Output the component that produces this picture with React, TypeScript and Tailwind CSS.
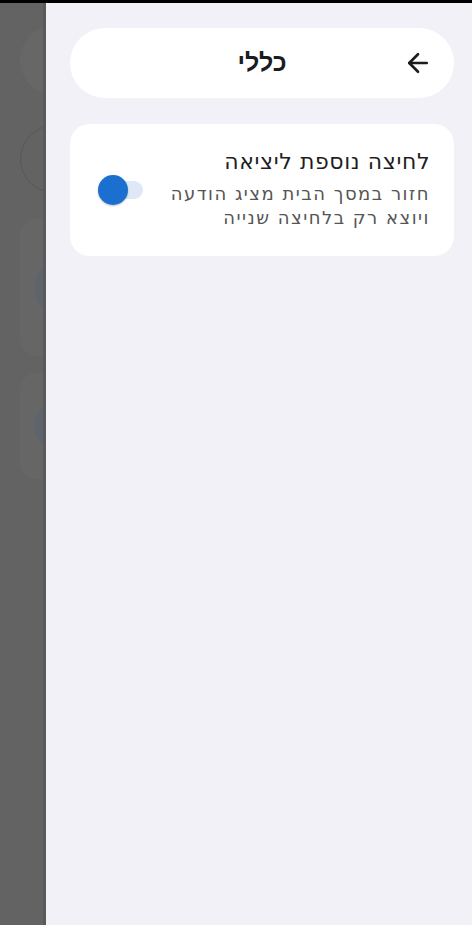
import { ArrowLeft } from "lucide-react";

const font = { fontFamily: '"Liberation Sans", "DejaVu Sans", sans-serif' };
const wide = { fontFamily: '"DejaVu Sans", sans-serif' };

function DimmedBackground() {
    return (
        <div className="relative w-[46px] shrink-0 overflow-hidden bg-[#636363]">
            {/* faint app behind the sheet */}
            <div className="flex w-[200px] flex-col pl-[20px] pt-[22px]">
                <div className="h-[70px] w-[70px] rounded-full bg-[#676767]" />
                <div className="mt-[30px] h-[68px] w-[68px] rounded-full border border-[#585858]" />
                <div className="mt-[26px] flex h-[137px] w-[160px] items-center rounded-[16px] bg-[#666666] pl-[14px]">
                    <div className="h-[52px] w-[52px] rounded-full bg-[#5e646c]" />
                </div>
                <div className="mt-[17px] flex h-[106px] w-[160px] items-center rounded-[16px] bg-[#666666] pl-[14px]">
                    <div className="h-[50px] w-[50px] rounded-full bg-[#5e646c]" />
                </div>
            </div>
            {/* edge shadow */}
            <div className="absolute right-0 top-0 h-full w-[3px] bg-[#5a5a5a]" />
        </div>
    );
}

export default function App() {
    return (
        <div className="flex h-[925px] w-[472px] flex-col bg-black" style={font}>
            <div className="h-[3px] shrink-0 bg-black" />
            <div className="flex flex-1">
                <DimmedBackground />
                {/* Settings sheet */}
                <div dir="rtl" className="flex flex-1 flex-col bg-[#f3f1f8] pl-[24px] pr-[18px] pt-[25px]">
                    {/* header */}
                    <div className="relative flex h-[70px] items-center justify-center rounded-full bg-white">
                        <span className="text-[25px] font-bold text-[#1c1b1f]">כללי</span>
                        <ArrowLeft className="absolute right-[21px] top-[20px] h-[30px] w-[30px] text-[#1c1b1f]" strokeWidth={2.1} />
                    </div>

                    {/* option card */}
                    <div className="mt-[26px] flex h-[132px] items-center justify-between rounded-[20px] bg-white pl-[28px] pr-[24px]" style={wide}>
                        <div className="flex flex-col pb-[2px]">
                            <span className="text-[22px] leading-[28px] tracking-[0.6px] text-[#1f1f1f]">לחיצה נוספת ליציאה</span>
                            <span className="mt-[6px] text-[18px] leading-[24px] tracking-[1.5px] text-[#555555]">חזור במסך הבית מציג הודעה</span>
                            <span className="text-[18px] leading-[24px] tracking-[1.5px] text-[#555555]">ויוצא רק בלחיצה שנייה</span>
                        </div>
                        {/* toggle */}
                        <div className="flex h-[18px] w-[45px] items-center justify-end rounded-full bg-[#dfe8f6]">
                            <div className="-mr-[2px] h-[30px] w-[30px] rounded-full bg-[#1b6fce] shadow-[0_1px_2px_rgba(0,0,0,0.25)]" />
                        </div>
                    </div>
                </div>
            </div>
        </div>
    );
}
